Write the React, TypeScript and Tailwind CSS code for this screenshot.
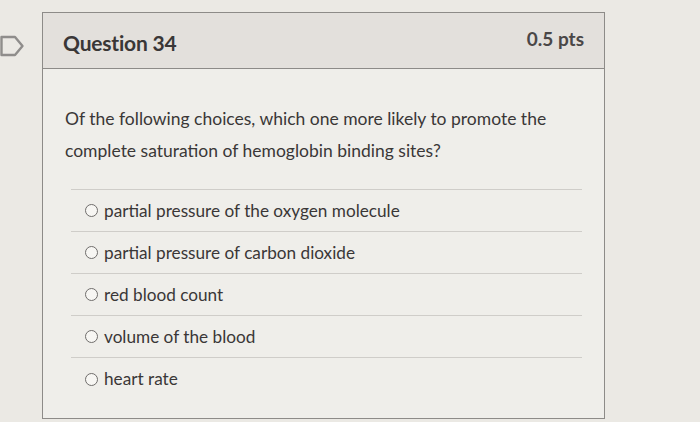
import React from "react";

const options = [
  "partial pressure of the oxygen molecule",
  "partial pressure of carbon dioxide",
  "red blood count",
  "volume of the blood",
  "heart rate",
];

export default function App() {
  return (
    <div className="relative w-[700px] h-[422px] overflow-hidden bg-[#ebe9e4] font-['Lato','Noto_Sans',sans-serif] text-[#3a3737]">
      <svg
        className="absolute left-0 top-[34px]"
        width="28"
        height="24"
        viewBox="0 0 28 24"
        fill="none"
      >
        <path
          d="M1.5 3 H15 L22.5 12 L15 21 H1.5 Z"
          stroke="#8f8d8b"
          strokeWidth="2.4"
          strokeLinejoin="round"
        />
      </svg>
      <div className="pt-[12px] pl-[42px]">
        <div className="w-[563px] h-[407px] border border-[#8d8b88] bg-[#efeeea]">
          <div className="h-[56px] flex items-center justify-between pt-[4px] pl-[20px] pr-[20px] bg-[#e3e0dc] border-b border-[#8d8b88]">
            <span className="text-[21px] font-bold tracking-[-0.2px]">Question 34</span>
            <span className="text-[19px] font-bold text-[#4a4747] mb-[6px]">0.5 pts</span>
          </div>
          <div className="pt-[34px] pl-[22px] pr-[22px]">
            <p className="text-[17.5px] leading-[32px]">
              Of the following choices, which one more likely to promote the
              <br />
              complete saturation of hemoglobin binding sites?
            </p>
            <div className="mt-[22px] ml-[6px] border-t border-[#cfcdc9]">
              {options.map((o, i) => (
                <div
                  key={o}
                  className={
                    i < options.length - 1
                      ? "h-[42px] flex items-center border-b border-[#cfcdc9]"
                      : "h-[42px] flex items-center"
                  }
                >
                  <span className="ml-[14px] mr-[6px] w-[13px] h-[13px] rounded-full border border-[#6f6d6b] bg-[#f7f6f3]" />
                  <span className="text-[17.2px]">{o}</span>
                </div>
              ))}
            </div>
          </div>
        </div>
      </div>
    </div>
  );
}
